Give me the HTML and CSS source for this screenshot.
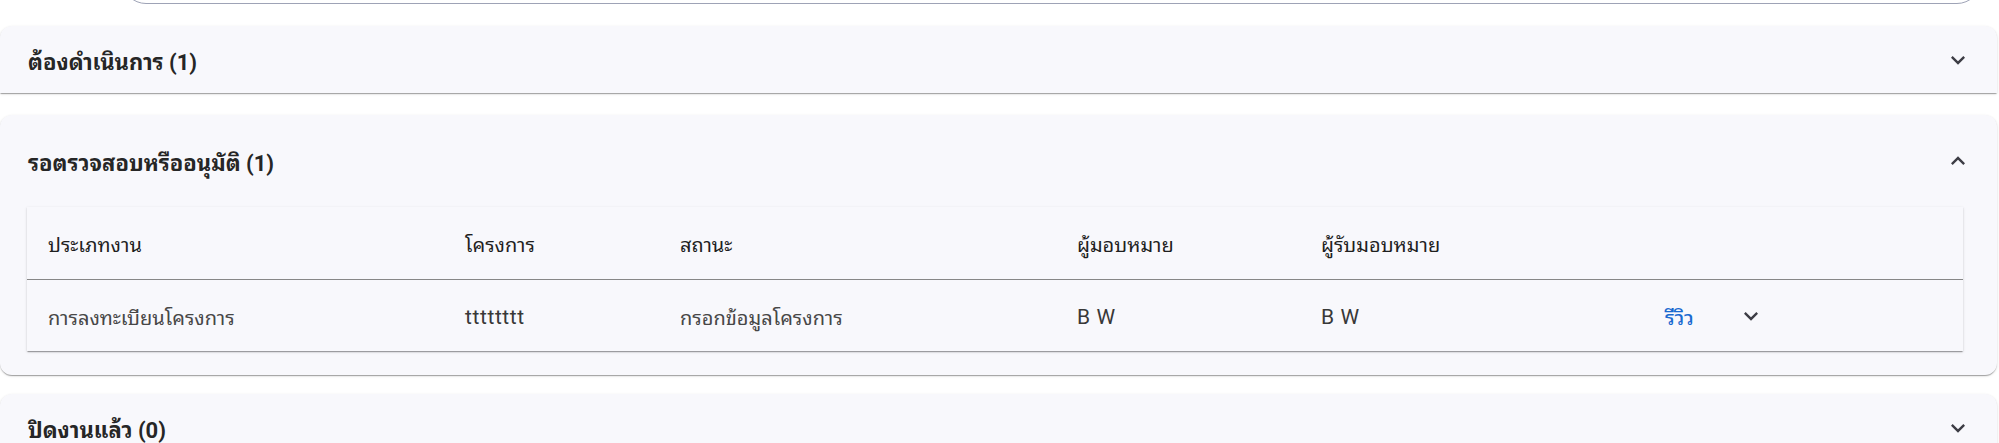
FILE: index.html
```html
<!DOCTYPE html>
<html lang="th">
<head>
<meta charset="utf-8">
<title>งาน</title>
<link rel="stylesheet" href="styles.css">
</head>
<body>
<div class="page">
  <div class="search-wrap"><div class="search"></div></div>

  <section class="panel panel-first">
    <div class="summary">
      <h2 class="title">ต้องดำเนินการ (1)</h2>
      <svg class="chev" viewBox="0 0 24 24"><path d="M16.59 8.59 12 13.17 7.41 8.59 6 10l6 6 6-6z"/></svg>
    </div>
  </section>

  <section class="panel panel-open">
    <div class="summary summary-open">
      <h2 class="title">รอตรวจสอบหรืออนุมัติ (1)</h2>
      <svg class="chev" viewBox="0 0 24 24"><path d="M12 8l-6 6 1.41 1.41L12 10.83l4.59 4.58L18 14z"/></svg>
    </div>
    <div class="details">
      <div class="card">
        <div class="row head">
          <div class="cell">ประเภทงาน</div>
          <div class="cell">โครงการ</div>
          <div class="cell">สถานะ</div>
          <div class="cell">ผู้มอบหมาย</div>
          <div class="cell">ผู้รับมอบหมาย</div>
          <div class="cell"></div>
        </div>
        <div class="row body">
          <div class="cell">การลงทะเบียนโครงการ</div>
          <div class="cell latin">tttttttt</div>
          <div class="cell">กรอกข้อมูลโครงการ</div>
          <div class="cell latin">B W</div>
          <div class="cell latin">B W</div>
          <div class="cell actions">
            <a class="link" href="#">รีวิว</a>
            <svg class="chev" viewBox="0 0 24 24"><path d="M16.59 8.59 12 13.17 7.41 8.59 6 10l6 6 6-6z"/></svg>
          </div>
        </div>
      </div>
    </div>
  </section>

  <section class="panel panel-last">
    <div class="summary">
      <h2 class="title">ปิดงานแล้ว (0)</h2>
      <svg class="chev" viewBox="0 0 24 24"><path d="M16.59 8.59 12 13.17 7.41 8.59 6 10l6 6 6-6z"/></svg>
    </div>
  </section>
</div>
</body>
</html>
```

FILE: styles.css
```css
html, body {
  margin: 0;
  padding: 0;
  background: #ffffff;
  overflow: hidden;
}

body {
  font-family: Roboto, "Noto Sans Thai Looped", "Noto Serif Thai", Loma, Garuda, Waree, Sarabun, "Noto Sans Thai", "Noto Sans", sans-serif;
  color: #2b2b2b;
}

.page {
  width: 1997px;
}

.search-wrap {
  height: 5px;
  overflow: hidden;
  margin: 0 16px 0 122px;
}

.search {
  height: 48px;
  margin-top: -44px;
  border: 1px solid #9ea3b6;
  border-radius: 24px;
  box-sizing: border-box;
}

.panel {
  background: #f8f8fc;
  box-shadow: 0 2px 1px -1px rgba(0,0,0,0.2), 0 1px 1px 0 rgba(0,0,0,0.14), 0 1px 3px 0 rgba(0,0,0,0.12);
}

.panel-first {
  margin-top: 21px;
  border-radius: 12px 12px 0 0;
}

.panel-open {
  margin-top: 22px;
  border-radius: 12px;
}

.panel-last {
  margin-top: 19px;
  border-radius: 12px 12px 0 0;
}

.summary {
  height: 67px;
  display: flex;
  align-items: center;
  justify-content: space-between;
  padding: 0 25px 0 28px;
}

.summary-open {
  height: 92px;
}

.title {
  margin: 0;
  font-size: 22px;
  font-weight: 700;
  color: #262626;
}

.chev {
  width: 28px;
  height: 28px;
  fill: #3d3d45;
  display: block;
}

.details {
  padding: 0 34px 24px 27px;
}

.card {
  background: #f8f8fc;
  box-shadow: 0 2px 1px -1px rgba(0,0,0,0.2), 0 1px 1px 0 rgba(0,0,0,0.14), 0 1px 3px 0 rgba(0,0,0,0.12);
}

.row {
  display: grid;
  grid-template-columns: 417px 215px 397px 244px 344px 1fr;
  padding-left: 21px;
  align-items: center;
  font-size: 20px;
}

.head {
  height: 72px;
  border-bottom: 1px solid #878787;
  color: #1f1f1f;
  font-weight: 400;
}

.body {
  height: 71px;
  color: #474747;
}

.latin {
  font-size: 21px;
  letter-spacing: 0.6px;
  color: #383838;
  padding-top: 3px;
}

.actions {
  display: flex;
  align-items: center;
  gap: 43px;
}

.link {
  color: #1a6ad0;
  text-decoration: none;
  font-weight: 500;
}
```
